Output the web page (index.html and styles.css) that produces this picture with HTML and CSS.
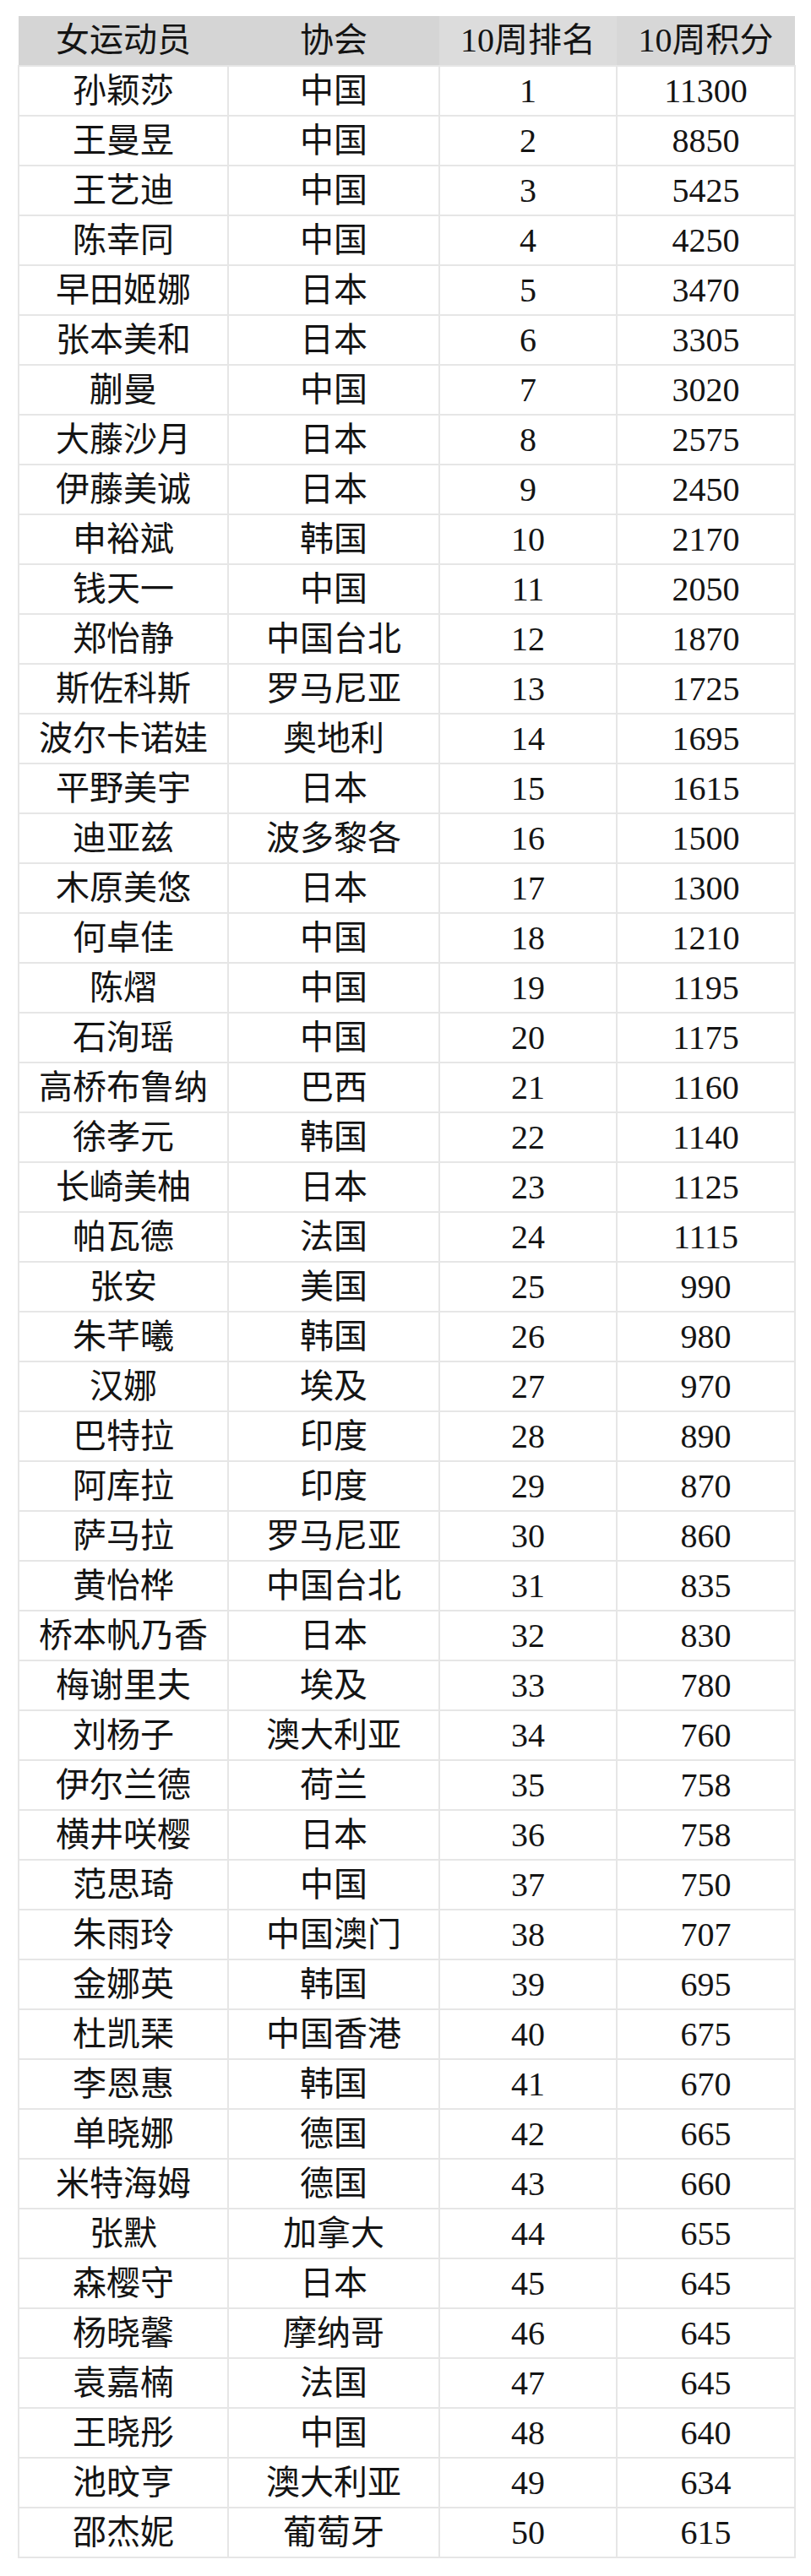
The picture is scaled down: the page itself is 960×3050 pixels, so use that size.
FILE: index.html
```html
<!DOCTYPE html>
<html lang="zh">
<head>
<meta charset="utf-8">
<link rel="stylesheet" href="styles.css">
</head>
<body>
<table class="rank">
<colgroup><col class="c1"><col class="c2"><col class="c3"><col class="c4"></colgroup>
<thead>
<tr><th class="h1">女运动员</th><th class="h2">协会</th><th class="h3">10周排名</th><th class="h4">10周积分</th></tr>
</thead>
<tbody>
<tr><td>孙颖莎</td><td>中国</td><td>1</td><td>11300</td></tr>
<tr><td>王曼昱</td><td>中国</td><td>2</td><td>8850</td></tr>
<tr><td>王艺迪</td><td>中国</td><td>3</td><td>5425</td></tr>
<tr><td>陈幸同</td><td>中国</td><td>4</td><td>4250</td></tr>
<tr><td>早田姬娜</td><td>日本</td><td>5</td><td>3470</td></tr>
<tr><td>张本美和</td><td>日本</td><td>6</td><td>3305</td></tr>
<tr><td>蒯曼</td><td>中国</td><td>7</td><td>3020</td></tr>
<tr><td>大藤沙月</td><td>日本</td><td>8</td><td>2575</td></tr>
<tr><td>伊藤美诚</td><td>日本</td><td>9</td><td>2450</td></tr>
<tr><td>申裕斌</td><td>韩国</td><td>10</td><td>2170</td></tr>
<tr><td>钱天一</td><td>中国</td><td>11</td><td>2050</td></tr>
<tr><td>郑怡静</td><td>中国台北</td><td>12</td><td>1870</td></tr>
<tr><td>斯佐科斯</td><td>罗马尼亚</td><td>13</td><td>1725</td></tr>
<tr><td>波尔卡诺娃</td><td>奥地利</td><td>14</td><td>1695</td></tr>
<tr><td>平野美宇</td><td>日本</td><td>15</td><td>1615</td></tr>
<tr><td>迪亚兹</td><td>波多黎各</td><td>16</td><td>1500</td></tr>
<tr><td>木原美悠</td><td>日本</td><td>17</td><td>1300</td></tr>
<tr><td>何卓佳</td><td>中国</td><td>18</td><td>1210</td></tr>
<tr><td>陈熠</td><td>中国</td><td>19</td><td>1195</td></tr>
<tr><td>石洵瑶</td><td>中国</td><td>20</td><td>1175</td></tr>
<tr><td>高桥布鲁纳</td><td>巴西</td><td>21</td><td>1160</td></tr>
<tr><td>徐孝元</td><td>韩国</td><td>22</td><td>1140</td></tr>
<tr><td>长崎美柚</td><td>日本</td><td>23</td><td>1125</td></tr>
<tr><td>帕瓦德</td><td>法国</td><td>24</td><td>1115</td></tr>
<tr><td>张安</td><td>美国</td><td>25</td><td>990</td></tr>
<tr><td>朱芊曦</td><td>韩国</td><td>26</td><td>980</td></tr>
<tr><td>汉娜</td><td>埃及</td><td>27</td><td>970</td></tr>
<tr><td>巴特拉</td><td>印度</td><td>28</td><td>890</td></tr>
<tr><td>阿库拉</td><td>印度</td><td>29</td><td>870</td></tr>
<tr><td>萨马拉</td><td>罗马尼亚</td><td>30</td><td>860</td></tr>
<tr><td>黄怡桦</td><td>中国台北</td><td>31</td><td>835</td></tr>
<tr><td>桥本帆乃香</td><td>日本</td><td>32</td><td>830</td></tr>
<tr><td>梅谢里夫</td><td>埃及</td><td>33</td><td>780</td></tr>
<tr><td>刘杨子</td><td>澳大利亚</td><td>34</td><td>760</td></tr>
<tr><td>伊尔兰德</td><td>荷兰</td><td>35</td><td>758</td></tr>
<tr><td>横井咲樱</td><td>日本</td><td>36</td><td>758</td></tr>
<tr><td>范思琦</td><td>中国</td><td>37</td><td>750</td></tr>
<tr><td>朱雨玲</td><td>中国澳门</td><td>38</td><td>707</td></tr>
<tr><td>金娜英</td><td>韩国</td><td>39</td><td>695</td></tr>
<tr><td>杜凯琹</td><td>中国香港</td><td>40</td><td>675</td></tr>
<tr><td>李恩惠</td><td>韩国</td><td>41</td><td>670</td></tr>
<tr><td>单晓娜</td><td>德国</td><td>42</td><td>665</td></tr>
<tr><td>米特海姆</td><td>德国</td><td>43</td><td>660</td></tr>
<tr><td>张默</td><td>加拿大</td><td>44</td><td>655</td></tr>
<tr><td>森樱守</td><td>日本</td><td>45</td><td>645</td></tr>
<tr><td>杨晓馨</td><td>摩纳哥</td><td>46</td><td>645</td></tr>
<tr><td>袁嘉楠</td><td>法国</td><td>47</td><td>645</td></tr>
<tr><td>王晓彤</td><td>中国</td><td>48</td><td>640</td></tr>
<tr><td>池旼亨</td><td>澳大利亚</td><td>49</td><td>634</td></tr>
<tr><td>邵杰妮</td><td>葡萄牙</td><td>50</td><td>615</td></tr>
</tbody>
</table>
</body>
</html>
```
FILE: styles.css
```css
html, body {
  margin: 0;
  padding: 0;
  background: #ffffff;
}
body {
  padding: 19px 0 0 21px;
}
.rank {
  border-collapse: collapse;
  table-layout: fixed;
  width: 919px;
  font-family: "Liberation Serif", "Noto Sans CJK SC", serif;
  color: #141414;
}
.c1 { width: 248px; }
.c2 { width: 250px; }
.c3 { width: 210px; }
.c4 { width: 211px; }
.rank th, .rank td {
  height: 59px;
  padding: 0;
  text-align: center;
  vertical-align: middle;
  font-weight: normal;
  font-size: 40px;
  line-height: 1;
  box-sizing: border-box;
}
.rank th {
  background: #d5d5d5;
  border: 0;
}
.rank th.h3 { background: #dcdcdc; }
.rank th.h4 { background: #d7d7d7; }
.rank td {
  border: 2px solid #e6e6e6;
}
```
